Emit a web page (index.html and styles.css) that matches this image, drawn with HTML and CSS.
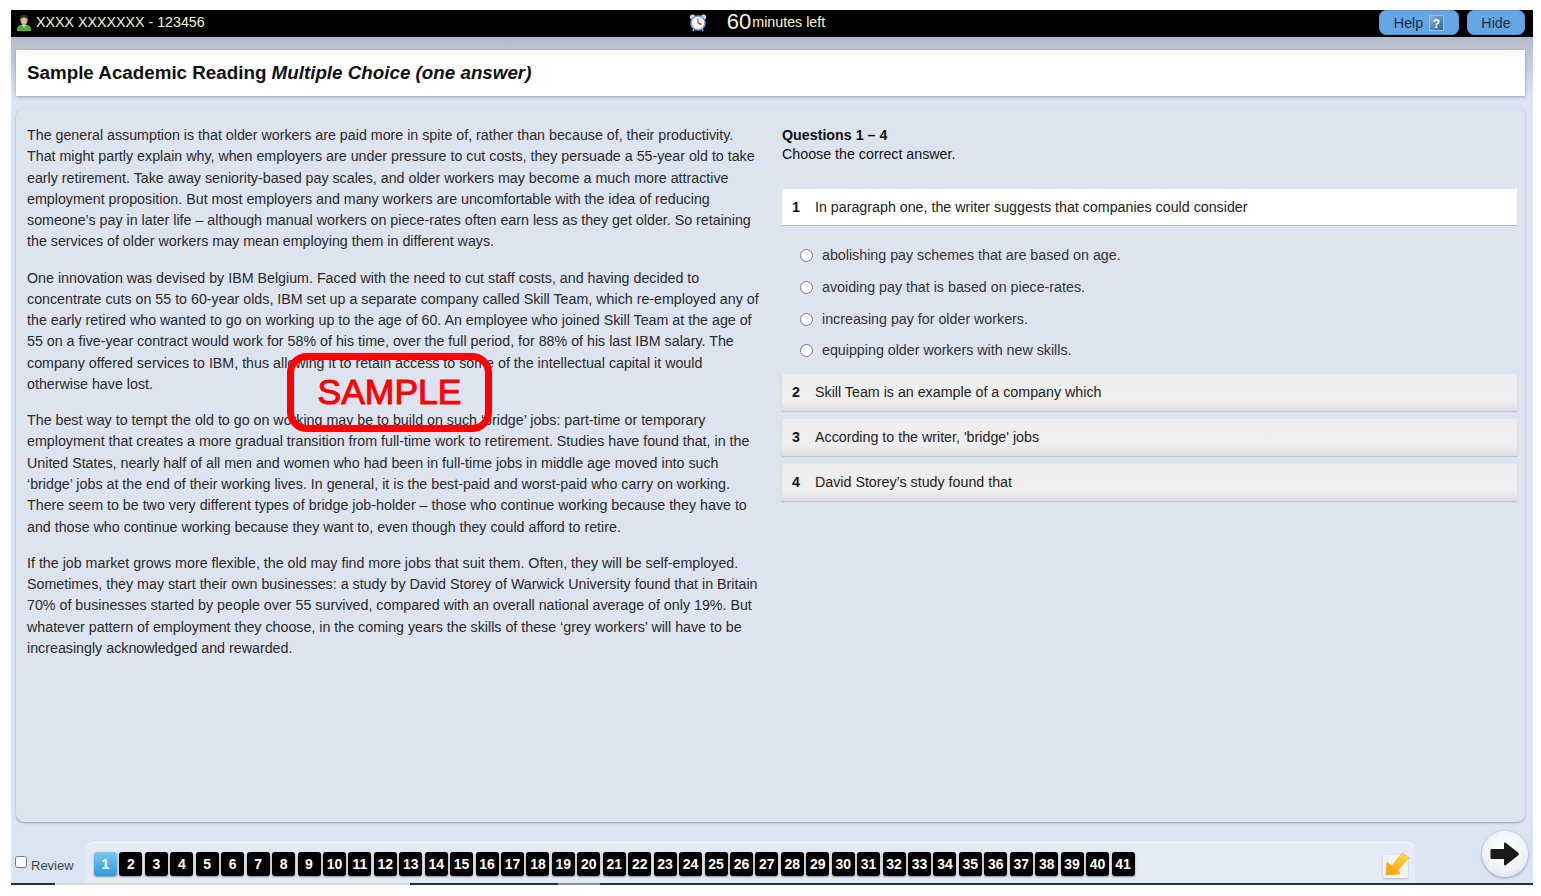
FILE: index.html
```html
<!DOCTYPE html>
<html lang="en">
<head>
    <meta charset="UTF-8">
    <meta name="viewport" content="width=device-width, initial-scale=1.0">
    <title>Sample Academic Reading</title>
    <link rel="stylesheet" href="styles.css">
</head>
<body>
    <div class="app">
        <div class="topbar">
            <div class="candidate">
                <svg class="person" width="16" height="17" viewBox="0 0 16 17">
                    <path d="M1 17c-.5-4.500 2-5.800 5-6.500h4c3 .7 5.500 2 5 6.500z" fill="#58a83a"/>
                    <path d="M6 10.500h4l-2 3z" fill="#eef2e6"/>
                    <ellipse cx="8" cy="6" rx="3.600" ry="4.600" fill="#d9b79c"/>
                    <path d="M4.300 5.500C4 1.500 6 .5 8 .5s4 1 3.700 5C10.500 3.800 9 3.400 8 3.400S5.500 3.800 4.300 5.500z" fill="#3a3029"/>
                </svg>
                <span>XXXX XXXXXXX - 123456</span>
            </div>
            <div class="timer">
                <svg class="clock" width="18" height="19" viewBox="0 0 18 19">
                    <circle cx="3.500" cy="4" r="2.600" fill="#c9d6ee"/>
                    <circle cx="14.500" cy="4" r="2.600" fill="#c9d6ee"/>
                    <path d="M4 18l2-4M14 18l-2-4" stroke="#d0d0d0" stroke-width="1.500"/>
                    <circle cx="9" cy="10" r="7" fill="#f3f6fc" stroke="#6f9ad8" stroke-width="1.600"/>
                    <path d="M9 5.500V10" stroke="#5a6b8c" stroke-width="1.200"/>
                    <path d="M9 10l3.500 1.500" stroke="#d8342c" stroke-width="1.500"/>
                </svg>
                <span class="minutes">60</span>
                <span class="left">minutes left</span>
            </div>
            <div class="top-buttons">
                <button class="top-btn help">Help
                    <svg width="15" height="16" viewBox="0 0 15 16">
                        <defs>
                            <linearGradient id="helpFill" x1="0" y1="0" x2="1" y2="1">
                                <stop offset="0" stop-color="#8fb2d6"/>
                                <stop offset="1" stop-color="#2f6296"/>
                            </linearGradient>
                        </defs>
                        <rect x="0.500" y="0.500" width="14" height="15" fill="url(#helpFill)" stroke="#9fbddb"/>
                        <text x="7.500" y="12.500" class="help-mark">?</text>
                    </svg>
                </button>
                <button class="top-btn hide">Hide</button>
            </div>
        </div>

        <div class="title-bar">Sample Academic Reading <em>Multiple Choice (one answer)</em></div>

        <div class="panel">
            <div class="passage">
                <p>The general assumption is that older workers are paid more in spite of, rather than because of, their productivity. That might partly explain why, when employers are under pressure to cut costs, they persuade a 55-year old to take early retirement. Take away seniority-based pay scales, and older workers may become a much more attractive employment proposition. But most employers and many workers are uncomfortable with the idea of reducing someone’s pay in later life – although manual workers on piece-rates often earn less as they get older. So retaining the services of older workers may mean employing them in different ways.</p>
                <p>One innovation was devised by IBM Belgium. Faced with the need to cut staff costs, and having decided to concentrate cuts on 55 to 60-year olds, IBM set up a separate company called Skill Team, which re-employed any of the early retired who wanted to go on working up to the age of 60. An employee who joined Skill Team at the age of 55 on a five-year contract would work for 58% of his time, over the full period, for 88% of his last IBM salary. The company offered services to IBM, thus allowing it to retain access to some of the intellectual capital it would otherwise have lost.</p>
                <p>The best way to tempt the old to go on working may be to build on such ‘bridge’ jobs: part-time or temporary employment that creates a more gradual transition from full-time work to retirement. Studies have found that, in the United States, nearly half of all men and women who had been in full-time jobs in middle age moved into such ‘bridge’ jobs at the end of their working lives. In general, it is the best-paid and worst-paid who carry on working. There seem to be two very different types of bridge job-holder – those who continue working because they have to and those who continue working because they want to, even though they could afford to retire.</p>
                <p>If the job market grows more flexible, the old may find more jobs that suit them. Often, they will be self-employed. Sometimes, they may start their own businesses: a study by David Storey of Warwick University found that in Britain 70% of businesses started by people over 55 survived, compared with an overall national average of only 19%. But whatever pattern of employment they choose, in the coming years the skills of these ‘grey workers’ will have to be increasingly acknowledged and rewarded.</p>
            </div>
            <div class="questions">
                <div class="q-heading">
                    <strong>Questions 1 – 4</strong><br>
                    Choose the correct answer.
                </div>
                <div class="q-row active"><b>1</b><span>In paragraph one, the writer suggests that companies could consider</span></div>
                <div class="options">
                    <label class="option"><input type="radio" name="q1"><span>abolishing pay schemes that are based on age.</span></label>
                    <label class="option"><input type="radio" name="q1"><span>avoiding pay that is based on piece-rates.</span></label>
                    <label class="option"><input type="radio" name="q1"><span>increasing pay for older workers.</span></label>
                    <label class="option"><input type="radio" name="q1"><span>equipping older workers with new skills.</span></label>
                </div>
                <div class="q-row"><b>2</b><span>Skill Team is an example of a company which</span></div>
                <div class="q-row"><b>3</b><span>According to the writer, 'bridge' jobs</span></div>
                <div class="q-row"><b>4</b><span>David Storey’s study found that</span></div>
            </div>
            <div class="stamp">SAMPLE</div>
        </div>

        <div class="footer">
            <label class="review"><input type="checkbox"><span>Review</span></label>
            <div class="nav">
                <div class="numbers" id="numbers"></div>
                <div class="note">
                    <svg width="28" height="28" viewBox="0 0 28 28">
                        <defs>
                            <linearGradient id="noteArrow" x1="1" y1="0" x2="0" y2="1">
                                <stop offset="0" stop-color="#ffe14d"/>
                                <stop offset="1" stop-color="#fb9a05"/>
                            </linearGradient>
                        </defs>
                        <path d="M3 24L4 11l5 4L19 2l7 5-11 12 2 4z" fill="url(#noteArrow)" stroke="#f5a90c" stroke-width="0.600" stroke-linejoin="round"/>
                    </svg>
                </div>
            </div>
            <button class="next">
                <svg width="30" height="24" viewBox="0 0 30 24">
                    <path d="M2 7h12V1.500c0-1 1-1.200 1.700-.7L28 10.500c1 .8 1 2.200 0 3L15.700 23.200c-.7.5-1.700.3-1.700-.7V17H2c-1 0-1.500-.5-1.500-1.500v-7C.5 7.500 1 7 2 7z" fill="#1a1a1a"/>
                </svg>
            </button>
        </div>
        <div class="bottom-strip"></div>
    </div>

    <script>
        // question numbers along the bottom
        let numbers = document.getElementById('numbers');
        for (let i = 1; i <= 41; i++) {
            let btn = document.createElement('button');
            btn.className = i === 1 ? 'num current' : 'num';
            btn.textContent = i;
            numbers.appendChild(btn);
        }
    </script>
</body>
</html>
```

FILE: styles.css
```css
* {
    box-sizing: border-box;
}

body {
    margin: 0;
    background-color: #fff;
    font-family: 'Liberation Sans', Arial, sans-serif;
    font-size: 14.25px;
    color: #222;
}

.app {
    width: 1522px;
    height: 875px;
    margin: 10px 0 0 11px;
    background: linear-gradient(#b3bbca 27px, #dbe4f3 85px);
    display: flex;
    flex-direction: column;
    position: relative;
}

.topbar {
    height: 27px;
    flex: none;
    background-color: #000;
    display: grid;
    grid-template-columns: 1fr auto 1fr;
    align-items: start;
    color: #f1f6cf;
    padding-left: 5px;
}

.candidate {
    height: 24px;
    display: flex;
    align-items: center;
    gap: 4px;
}

.timer {
    height: 24px;
    display: flex;
    align-items: center;
    color: #fbf5d2;
    margin-right: 35px;
}

.clock {
    margin-right: 20px;
}

.minutes {
    font-size: 22px;
    margin-right: 1px;
}

.top-buttons {
    display: flex;
    justify-content: flex-end;
    gap: 8px;
    padding-right: 8px;
}

.top-btn {
    height: 25px;
    border: 1px solid #5a95d0;
    border-radius: 7px;
    background-color: #64a6e3;
    color: #1f2d3d;
    font-family: inherit;
    font-size: 14.25px;
    padding: 0;
    display: flex;
    align-items: center;
    justify-content: center;
    gap: 6px;
}

.help {
    width: 80px;
}

.hide {
    width: 58px;
}

.help-mark {
    font-size: 12px;
    font-weight: bold;
    fill: #fff;
    text-anchor: middle;
}

.title-bar {
    flex: none;
    height: 46px;
    margin: 13px 8px 0 5px;
    padding-left: 11px;
    line-height: 45px;
    background-color: #fff;
    box-shadow: 0 1px 3px rgba(80, 90, 110, 0.5);
    font-size: 18.8px;
    font-weight: bold;
    color: #111;
}

.panel {
    flex: none;
    height: 714px;
    margin: 12px 8px 0 5px;
    padding: 17px 8px 0 11px;
    background-color: #dde3ef;
    border-radius: 8px;
    box-shadow: 0 1px 2px rgba(80, 90, 110, 0.5);
    display: flex;
    gap: 20px;
    position: relative;
    line-height: 21.3px;
}

.passage {
    width: 735px;
    flex: none;
    color: #2a2a2a;
}

.passage p {
    margin: 0 0 14.800px;
}

.questions {
    flex: 1;
}

.q-heading {
    height: 64px;
    padding-top: 1px;
    line-height: 19px;
    color: #111;
}

.q-row {
    height: 37px;
    display: flex;
    align-items: center;
    padding-left: 10px;
    margin-bottom: 8px;
    background: linear-gradient(#ededed, #efefef 70%, #dfdfe3);
    box-shadow: 0 1px 1px rgba(120, 125, 140, 0.3);
}

.q-row b {
    width: 23px;
    flex: none;
    color: #111;
}

.q-row.active {
    background: #fff;
    border-bottom: 1px solid #b5b9c2;
    box-shadow: none;
    padding-top: 1px;
    margin-bottom: 14px;
}

.options {
    margin-bottom: 7px;
}

.option {
    height: 31.700px;
    display: flex;
    align-items: center;
    padding-left: 18px;
    color: #333;
}

.option input {
    margin: 0 9px 0 0;
    width: 13px;
    height: 13px;
}

.stamp {
    position: absolute;
    left: 271px;
    top: 245px;
    width: 205px;
    height: 79px;
    border: 7px solid #f00;
    border-radius: 20px;
    color: #f00;
    font-size: 35.5px;
    -webkit-text-stroke: 1px #f00;
    text-align: center;
    line-height: 64px;
}

.footer {
    flex: 1;
    display: flex;
    align-items: flex-end;
    position: relative;
}

.review {
    width: 70px;
    margin-left: 4px;
    display: flex;
    align-items: center;
    height: 38px;
    color: #444;
    font-size: 13px;
}

.review input {
    margin: 0 4px 4px 0;
    width: 12px;
    height: 12px;
}

.review span {
    margin-top: 2px;
}

.nav {
    width: 1330px;
    height: 40px;
    padding: 9px 0 0 9px;
    background-color: #e4eaf6;
    border-radius: 8px 8px 0 0;
    box-shadow: 0 -1px 1px rgba(255, 255, 255, 0.8);
    display: flex;
    justify-content: space-between;
}

.numbers {
    display: flex;
    gap: 2.450px;
}

.num {
    width: 23px;
    height: 24px;
    padding: 0;
    border: none;
    border-radius: 3px;
    background-color: #000;
    color: #fff;
    font-family: inherit;
    font-size: 14px;
    font-weight: bold;
    box-shadow: 0 1px 2px rgba(0, 0, 0, 0.4);
}

.num.current {
    background: linear-gradient(#7cc7ee, #2e9adf);
}

.note {
    width: 25px;
    height: 23px;
    margin: 3px 7px 0 0;
    background-color: #f1f3f7;
    border-radius: 2px;
    box-shadow: 0 1px 2px rgba(120, 120, 120, 0.4);
    position: relative;
}

.note svg {
    position: absolute;
    left: 0;
    top: -4px;
}

.next {
    position: absolute;
    left: 1471px;
    bottom: 6px;
    width: 46px;
    height: 46px;
    padding: 0;
    border: none;
    border-radius: 50%;
    background: radial-gradient(circle at 50% 40%, #fff, #eef2f3 60%, #c9d3d6);
    box-shadow: 0 1px 3px rgba(60, 70, 80, 0.5);
    display: flex;
    align-items: center;
    justify-content: center;
}

.bottom-strip {
    height: 2px;
    flex: none;
    background: linear-gradient(to right, #2a2d38 44px, #d8d8d4 44px, #d8d8d4 399px, #2a2d38 399px, #2a2d38 547px, #8a8d96 547px, #8a8d96 589px, #2a2d38 589px);
}
```
